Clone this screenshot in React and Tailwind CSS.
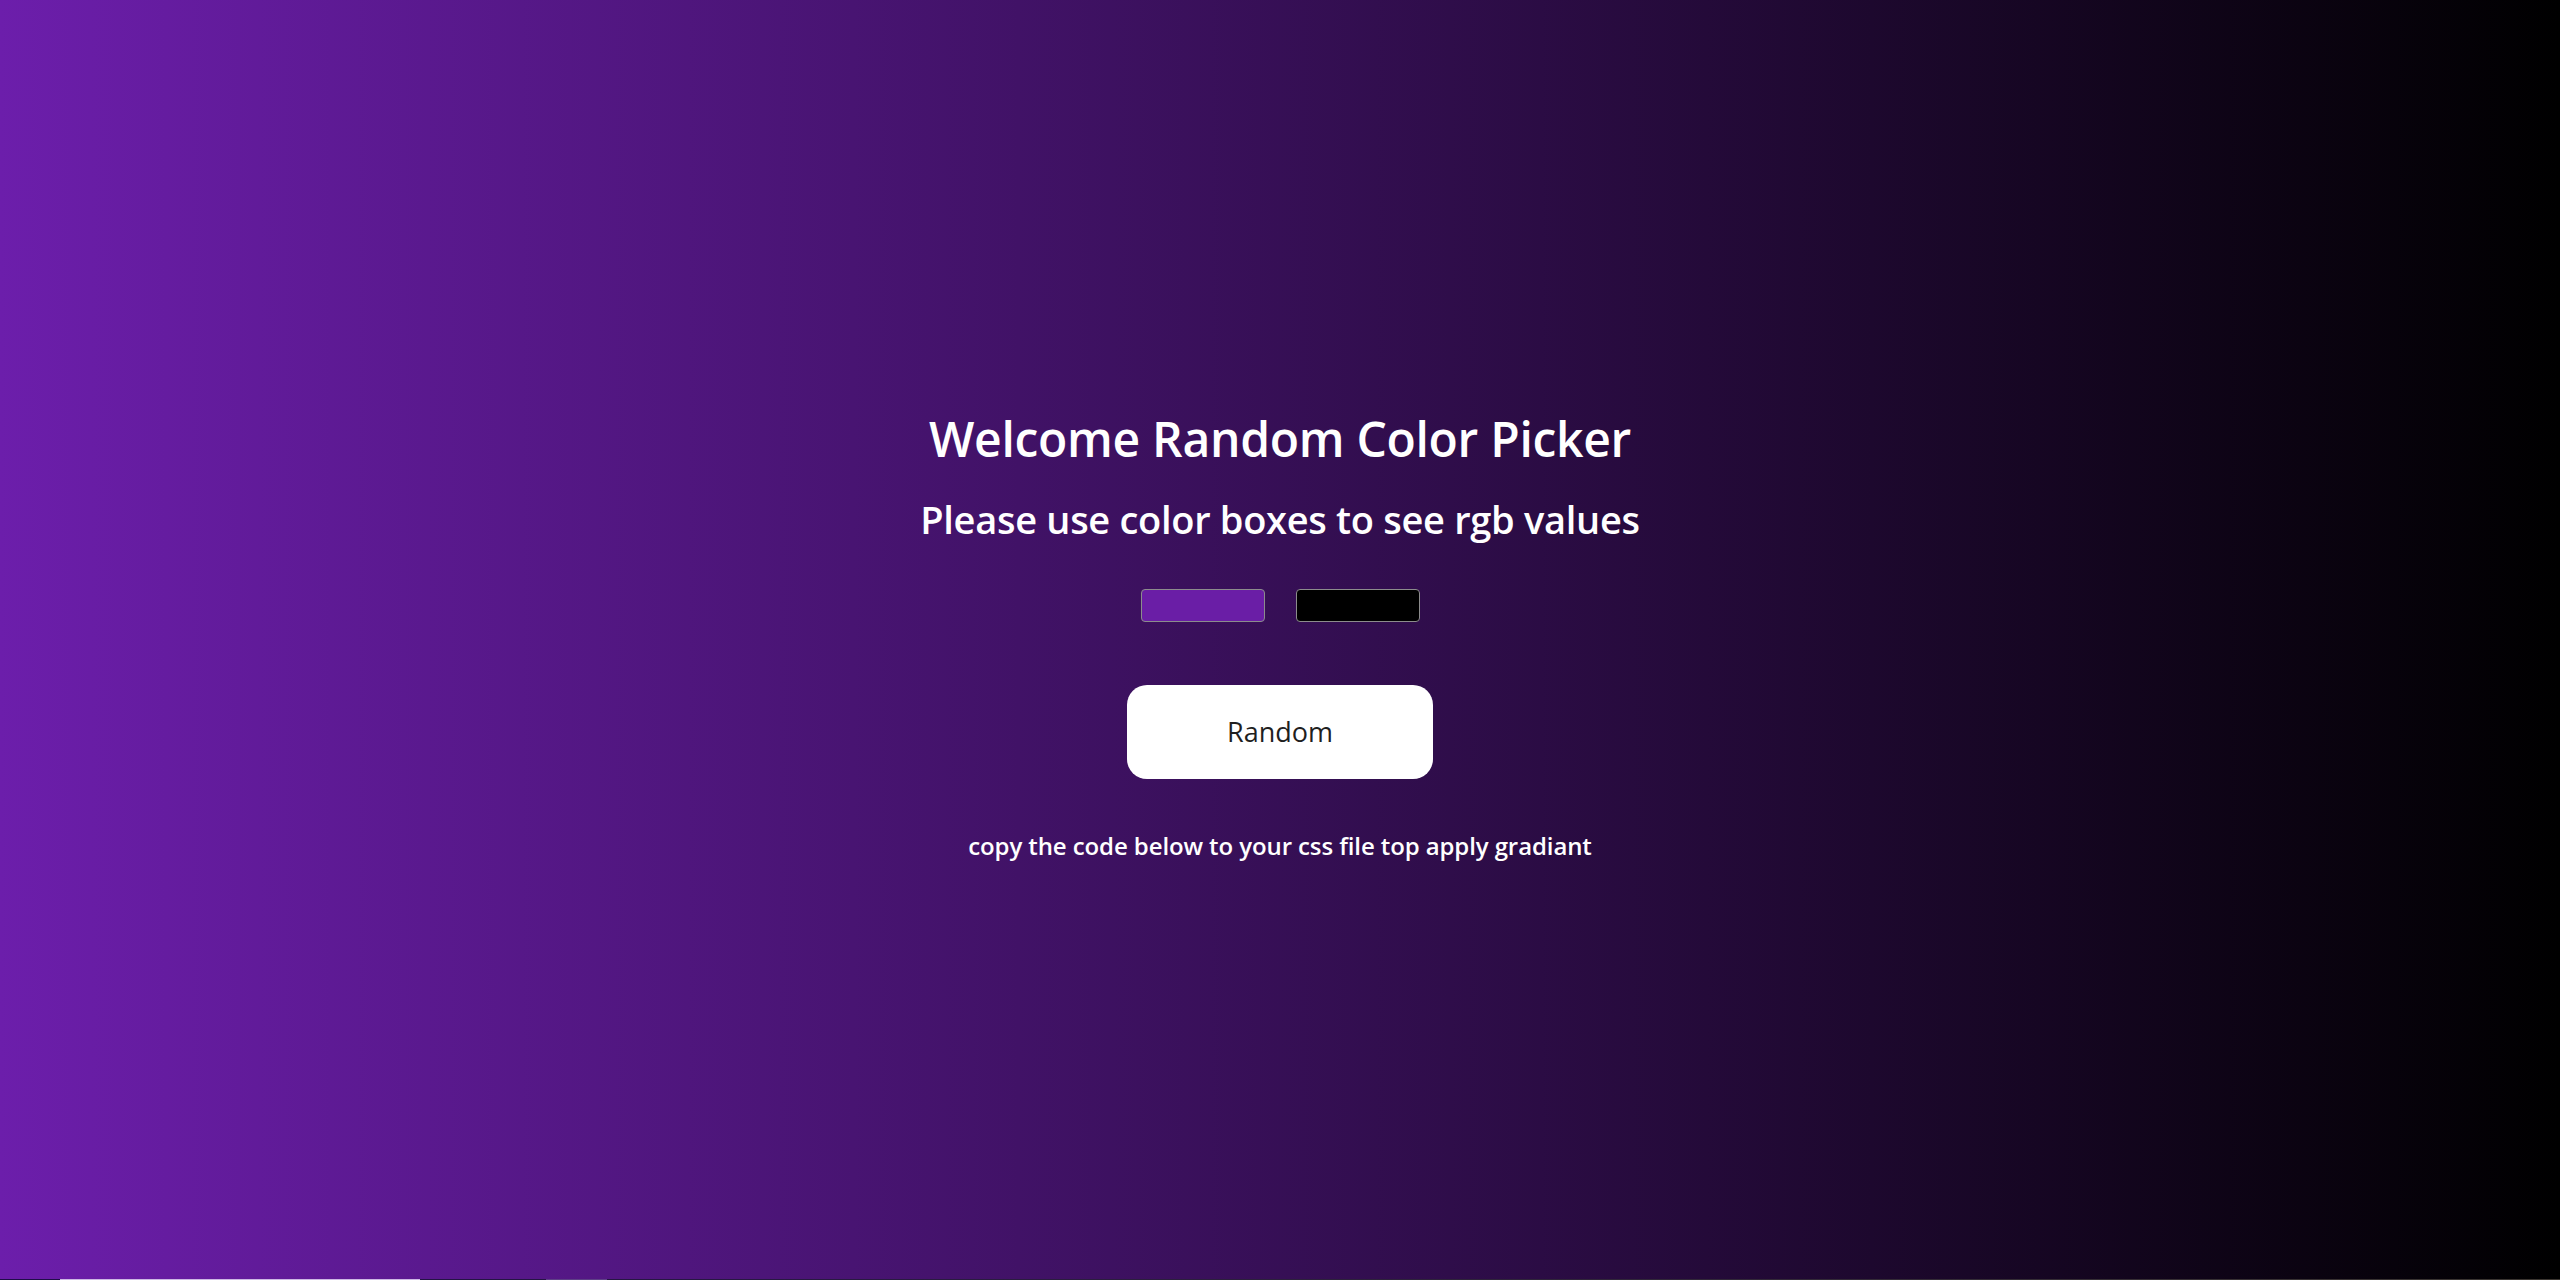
import React, { useState } from 'react';

const font = { fontFamily: '"Open Sans", "Noto Sans", sans-serif' };

const App = () => {
    const [colors] = useState(['#6a1ea6', '#000000']);

    return (
        <div style={font} className="w-full min-h-screen">
            <div className="h-[1279px] flex flex-col items-center pt-[409px] bg-[linear-gradient(to_right,#6c1eab,#000000)] text-white">
                <h1 className="text-[48px] leading-[60px] font-semibold tracking-[-0.3px]">Welcome Random Color Picker</h1>
                <h2 className="mt-[27px] text-[38px] leading-[46px] font-semibold tracking-[-0.3px]">Please use color boxes to see rgb values</h2>

                <div className="mt-[47px] flex gap-[31px]">
                    {colors.map((c) => (
                        <div
                            key={c}
                            className="w-[124px] h-[33px] rounded-[4px] border border-[#8c8c8c]"
                            style={{ backgroundColor: c }}
                        />
                    ))}
                </div>

                <button className="mt-[63px] w-[306px] h-[94px] rounded-[20px] bg-white text-[27px] text-[#1f1f1f]">
                    Random
                </button>

                <p className="mt-[51px] text-[24px] leading-[32px] font-semibold tracking-[-0.1px]">
                    copy the code below to your css file top apply gradiant
                </p>
            </div>

            {/* sliver of the code block below the fold */}
            <div className="h-px flex bg-[linear-gradient(to_right,#1f0d48,#3a3530)]">
                <div className="w-[60px]" />
                <div className="w-[360px] bg-[#cdb9e4]" />
                <div className="w-[126px]" />
                <div className="w-[61px] bg-[#5e4086]" />
            </div>
        </div>
    );
};

export default App;
